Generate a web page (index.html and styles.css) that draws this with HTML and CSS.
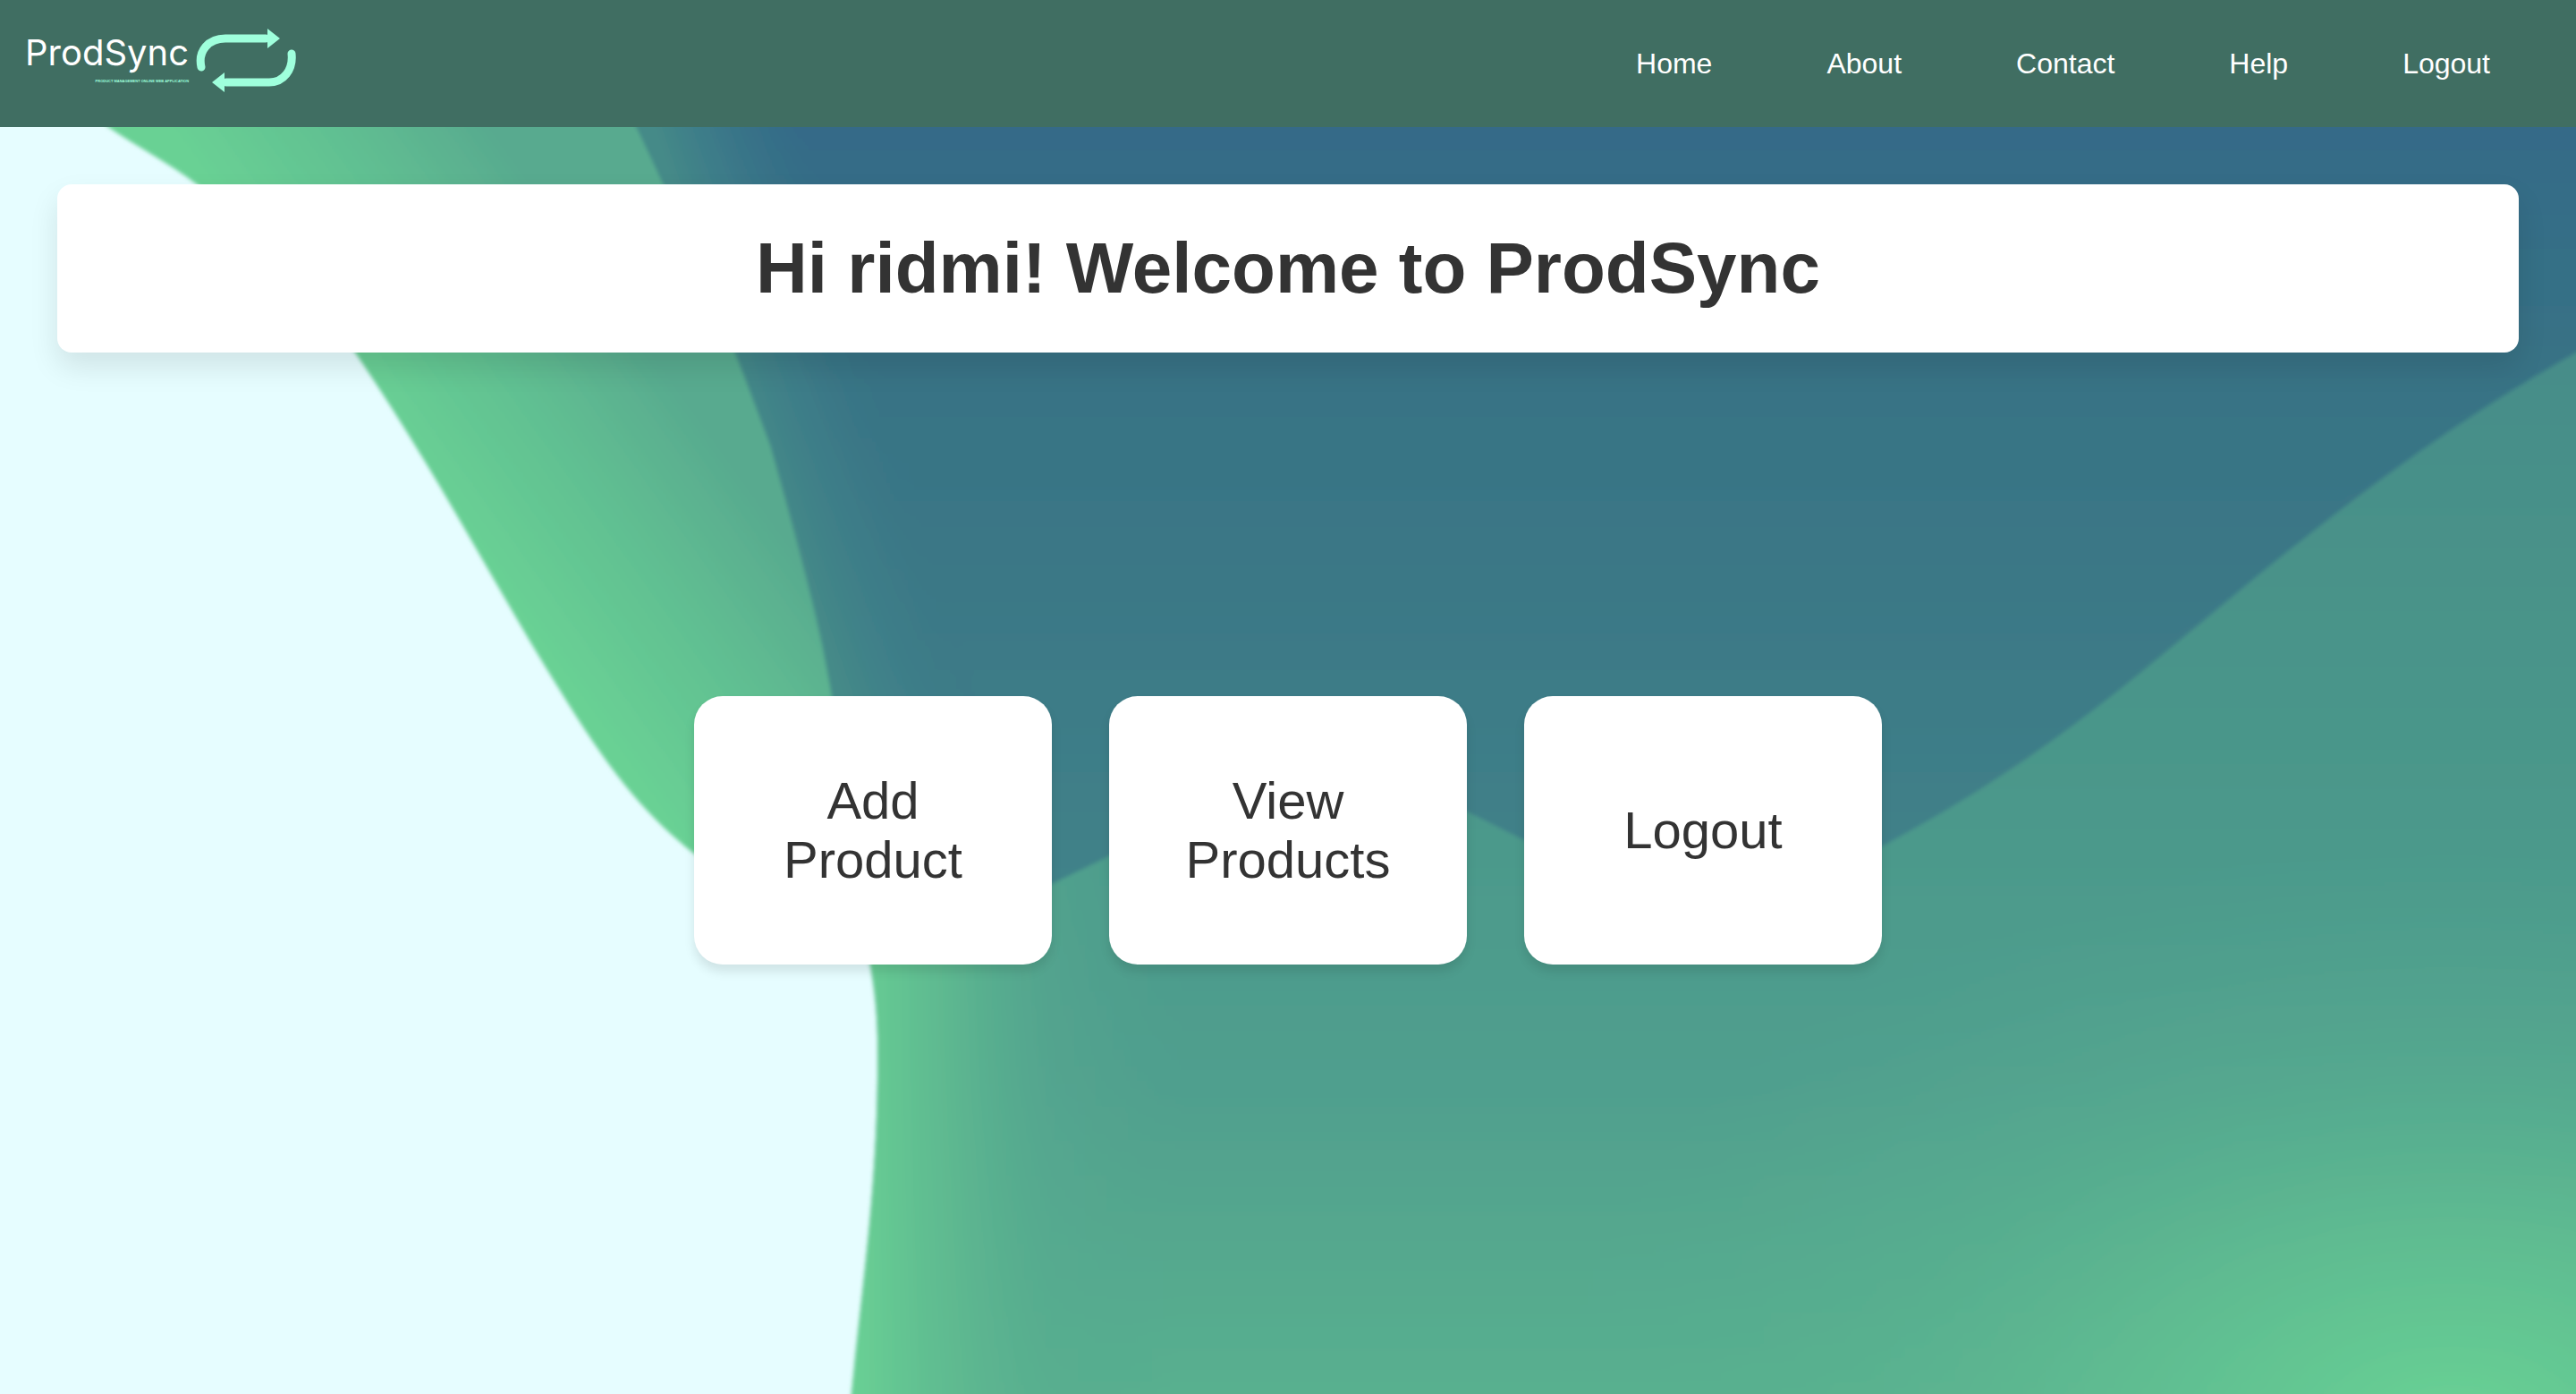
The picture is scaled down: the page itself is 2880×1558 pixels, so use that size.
FILE: index.html
```html
<!DOCTYPE html>
<html lang="en">
<head>
<meta charset="utf-8">
<meta name="viewport" content="width=device-width, initial-scale=1">
<title>ProdSync</title>
<link rel="stylesheet" href="styles.css">
</head>
<body class="page">
<svg class="backdrop" viewBox="0 0 2880 1558" preserveAspectRatio="xMidYMid slice" aria-hidden="true">
  <defs>
    <linearGradient id="ribbon" gradientUnits="userSpaceOnUse" x1="377" y1="408" x2="617" y2="236">
      <stop offset="0" stop-color="#69d194"/>
      <stop offset="0.5" stop-color="#61c092"/>
      <stop offset="1" stop-color="#58aa8f"/>
    </linearGradient>
    <linearGradient id="deep" gradientUnits="userSpaceOnUse" x1="0" y1="142" x2="0" y2="980">
      <stop offset="0" stop-color="#346b88"/>
      <stop offset="0.35" stop-color="#387385"/>
      <stop offset="0.7" stop-color="#3c7a87"/>
      <stop offset="1" stop-color="#418289"/>
    </linearGradient>
    <linearGradient id="deepEdge" gradientUnits="userSpaceOnUse" x1="815" y1="396" x2="960" y2="348">
      <stop offset="0" stop-color="#458a88"/>
      <stop offset="0.4" stop-color="#40828a" stop-opacity="0.65"/>
      <stop offset="1" stop-color="#3a7686" stop-opacity="0"/>
    </linearGradient>
    <linearGradient id="hill" gradientUnits="userSpaceOnUse" x1="0" y1="400" x2="0" y2="1558">
      <stop offset="0" stop-color="#468d89"/>
      <stop offset="0.35" stop-color="#4a968a"/>
      <stop offset="0.7" stop-color="#509f8e"/>
      <stop offset="1" stop-color="#59b08f"/>
    </linearGradient>
    <linearGradient id="hillEdge" gradientUnits="userSpaceOnUse" x1="955" y1="0" x2="1320" y2="0">
      <stop offset="0" stop-color="#69d094"/>
      <stop offset="0.3" stop-color="#60bd91" stop-opacity="0.8"/>
      <stop offset="0.6" stop-color="#58ad90" stop-opacity="0.4"/>
      <stop offset="1" stop-color="#54a68f" stop-opacity="0"/>
    </linearGradient>
    <radialGradient id="glow" gradientUnits="userSpaceOnUse" cx="2740" cy="1600" r="1000" gradientTransform="translate(0 560) scale(1 0.65)">
      <stop offset="0" stop-color="#69d394"/>
      <stop offset="0.3" stop-color="#64c693" stop-opacity="0.75"/>
      <stop offset="0.65" stop-color="#5cb691" stop-opacity="0.35"/>
      <stop offset="1" stop-color="#58ac90" stop-opacity="0"/>
    </radialGradient>
    <filter id="soft" x="-5%" y="-5%" width="110%" height="110%">
      <feGaussianBlur stdDeviation="2"/>
    </filter>
  </defs>
  <rect width="2880" height="1558" fill="#e6fdff"/>
  <g filter="url(#soft)">
    <path d="M900 930C950 960 980 1070 981 1160C983 1330 962 1440 948 1600H2960V340H1600L1100 900Z" fill="url(#hill)"/>
    <path d="M900 930C950 960 980 1070 981 1160C983 1330 962 1440 948 1600H2960V340H1600L1100 900Z" fill="url(#hillEdge)"/>
    <path d="M900 930C950 960 980 1070 981 1160C983 1330 962 1440 948 1600H2960V340H1600L1100 900Z" fill="url(#glow)"/>
    <path d="M-20 50C40 85 80 110 121 142C155 165 190 183 220 206C295 270 350 325 397 394C490 530 550 650 625 770C680 860 720 910 776 954C850 1010 940 1030 1000 1030L1100 700L800 0H-20Z" fill="url(#ribbon)"/>
    <path d="M650 20C755 220 810 360 861 497C890 600 918 700 930 778C950 860 960 960 990 1010C1050 1030 1120 1012 1176 988L1240 957C1300 925 1350 880 1440 870C1520 865 1590 885 1640 907L1704 939C1830 1005 1980 1010 2104 946C2290 846 2380 762 2533 636C2655 538 2770 450 2960 350V-20Z" fill="url(#deep)"/>
    <path d="M650 20C755 220 810 360 861 497C890 600 918 700 930 778C950 860 960 960 990 1010C1050 1030 1120 1012 1176 988L1240 957C1300 925 1350 880 1440 870L1600 0Z" fill="url(#deepEdge)"/>
  </g>
</svg>

<header class="topbar">
  <a class="logo" href="#home" aria-label="ProdSync">
    <span class="logo-words">
      <span class="logo-name">ProdSync</span>
      <span class="logo-tagline">PRODUCT MANAGEMENT ONLINE WEB APPLICATION</span>
    </span>
    <svg class="logo-mark" viewBox="218 28 118 78" aria-hidden="true">
      <g fill="none" stroke="#9fffdc" stroke-width="9" stroke-linecap="round">
        <path d="M226 75C222 57 234 43 253 43H298"/>
        <path d="M327 60C329 78 318 92 302 92H254"/>
      </g>
      <path d="M300 32L314 43L300 54ZM252 81L238 92L252 103Z" fill="#9fffdc"/>
    </svg>
  </a>
  <nav class="menu">
    <a class="menu-link" href="#home">Home</a>
    <a class="menu-link" href="#about">About</a>
    <a class="menu-link" href="#contact">Contact</a>
    <a class="menu-link" href="#help">Help</a>
    <a class="menu-link" href="#logout">Logout</a>
  </nav>
</header>

<main class="content">
  <h1 class="welcome">Hi ridmi! Welcome to ProdSync</h1>
  <div class="cards">
    <a class="card" href="#add-product">Add Product</a>
    <a class="card" href="#view-products">View Products</a>
    <a class="card" href="#logout">Logout</a>
  </div>
</main>
</body>
</html>
```
FILE: styles.css
```css
* {
  box-sizing: border-box;
}

.page {
  position: relative;
  display: flex;
  flex-direction: column;
  min-height: 100vh;
  margin: 0;
  font-family: "Liberation Sans", Arial, sans-serif;
  color: #333333;
}

.backdrop {
  position: absolute;
  inset: 0;
  z-index: -1;
  width: 100%;
  height: 100%;
}

.topbar {
  display: flex;
  align-items: center;
  justify-content: space-between;
  padding: 28px 96px 28px 28px;
  background: #406e62;
}

.logo {
  display: flex;
  align-items: center;
  gap: 6px;
  padding-bottom: 8px;
  color: #ffffff;
  text-decoration: none;
}

.logo-words {
  display: flex;
  flex-direction: column;
  align-items: flex-end;
  gap: 8px;
}

.logo-name {
  font-family: Inter, "Liberation Sans", sans-serif;
  font-size: 40px;
  line-height: 40px;
}

.logo-tagline {
  font-family: "Liberation Sans Narrow", "Liberation Sans", sans-serif;
  font-size: 4px;
  font-weight: 700;
  line-height: 8px;
  color: #9fffdc;
}

.logo-mark {
  width: 118px;
  height: 78px;
}

.menu {
  display: flex;
  gap: 128px;
}

.menu-link {
  font-size: 32px;
  line-height: 36px;
  color: #ffffff;
  text-decoration: none;
}

.content {
  display: flex;
  flex: 1;
  flex-direction: column;
  padding: 64px 64px 96px;
}

.welcome {
  margin: 0;
  padding: 48px;
  border-radius: 16px;
  background: #ffffff;
  box-shadow: 0 16px 32px rgba(0, 0, 0, 0.1);
  font-size: 80px;
  line-height: 92px;
  text-align: center;
}

.cards {
  display: flex;
  flex: 1;
  flex-wrap: wrap;
  align-items: center;
  align-content: center;
  justify-content: center;
  gap: 64px;
}

.card {
  display: flex;
  align-items: center;
  justify-content: center;
  width: 400px;
  min-height: 300px;
  padding: 64px;
  border-radius: 32px;
  background: #ffffff;
  box-shadow: 0 8px 12px rgba(0, 0, 0, 0.1);
  font-size: 58px;
  line-height: 66px;
  color: #333333;
  text-align: center;
  text-decoration: none;
}
```
